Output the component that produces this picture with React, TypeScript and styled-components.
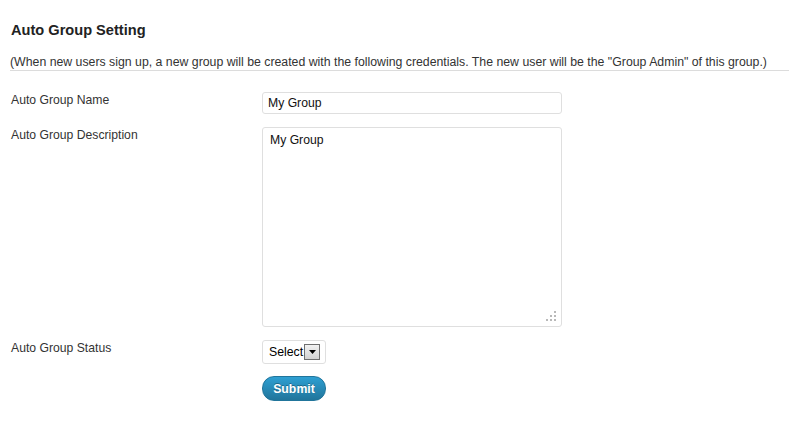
import React from "react";
import styled, { createGlobalStyle } from "styled-components";

const Global = createGlobalStyle`
  html, body { margin: 0; padding: 0; background: #fff; }
  body { font-family: "Liberation Sans", Arial, sans-serif; color: #333; }
`;

const Page = styled.div`
  padding: 20px 0 0 11px;
  width: 778px;
`;

const Heading = styled.h3`
  margin: 0;
  font-size: 14.6px;
  font-weight: bold;
  line-height: 20px;
  color: #222;
`;

const Note = styled.p`
  margin: 15px 0 0 -1px;
  padding-bottom: 0;
  font-size: 12.3px;
  line-height: 15px;
  color: #333;
  border-bottom: 1px solid #dcdcdc;
`;

const Form = styled.div`
  display: grid;
  grid-template-columns: 251px 300px;
  row-gap: 13px;
  margin-top: 21px;
`;

const Label = styled.label`
  font-size: 12.2px;
  line-height: 15px;
  padding-top: 1px;
  color: #333;
`;

const TextInput = styled.input`
  box-sizing: border-box;
  width: 300px;
  height: 22px;
  border: 1px solid #dfdfdf;
  border-radius: 3px;
  padding: 0 5px;
  font: 12.2px "Liberation Sans", Arial, sans-serif;
  color: #111;
  outline: none;
`;

const AreaWrap = styled.div`
  position: relative;
  width: 300px;
  height: 200px;
`;

const TextArea = styled.textarea`
  box-sizing: border-box;
  width: 100%;
  height: 100%;
  border: 1px solid #dfdfdf;
  border-radius: 3px;
  padding: 5px 7px;
  resize: none;
  font: 12.2px/15px "Liberation Sans", Arial, sans-serif;
  color: #111;
  outline: none;
  display: block;
`;

const Grip = styled.svg`
  position: absolute;
  right: 6px;
  bottom: 6px;
`;

const SelectBox = styled.div`
  box-sizing: border-box;
  display: inline-flex;
  align-items: center;
  gap: 1px;
  height: 24px;
  width: 64px;
  padding: 0 2px 0 6px;
  border: 1px solid #dfdfdf;
  border-radius: 3px;
  font-size: 12.3px;
  color: #000;
`;

const ArrowBtn = styled.span`
  box-sizing: border-box;
  width: 16px;
  height: 16px;
  border: 1px solid #6f6f6f;
  background: linear-gradient(#f2f2f2, #d2d2d2);
  display: flex;
  align-items: center;
  justify-content: center;
`;

const SubmitCell = styled.div`
  margin-top: -1px;
`;

const SubmitBtn = styled.button`
  box-sizing: border-box;
  width: 64px;
  height: 25px;
  border: 1px solid #21759b;
  border-radius: 12px;
  background: linear-gradient(#2e9fd2, #21759b);
  color: #fff;
  font: bold 12.3px "Liberation Sans", Arial, sans-serif;
  text-shadow: 0 -1px 0 rgba(0, 0, 0, 0.3);
  padding: 0;
  cursor: pointer;
`;

const Empty = styled.div``;

export default function App() {
  return (
    <>
      <Global />
      <Page>
        <Heading>Auto Group Setting</Heading>
        <Note>
          (When new users sign up, a new group will be created with the following credentials. The new user will be the "Group Admin" of this group.)
        </Note>
        <Form>
          <Label>Auto Group Name</Label>
          <TextInput defaultValue="My Group" />
          <Label>Auto Group Description</Label>
          <AreaWrap>
            <TextArea defaultValue="My Group" />
            <Grip width="10" height="10" viewBox="0 0 10 10">
              <g fill="#b9b9b9">
                <rect x="8" y="0" width="2" height="2" />
                <rect x="4" y="4" width="2" height="2" />
                <rect x="8" y="4" width="2" height="2" />
                <rect x="0" y="8" width="2" height="2" />
                <rect x="4" y="8" width="2" height="2" />
                <rect x="8" y="8" width="2" height="2" />
              </g>
            </Grip>
          </AreaWrap>
          <Label>Auto Group Status</Label>
          <div>
            <SelectBox>
              Select
              <ArrowBtn>
                <svg width="7" height="4" viewBox="0 0 7 4">
                  <path d="M0 0h7L3.5 4z" fill="#000" />
                </svg>
              </ArrowBtn>
            </SelectBox>
          </div>
          <Empty />
          <SubmitCell>
            <SubmitBtn>Submit</SubmitBtn>
          </SubmitCell>
        </Form>
      </Page>
    </>
  );
}
